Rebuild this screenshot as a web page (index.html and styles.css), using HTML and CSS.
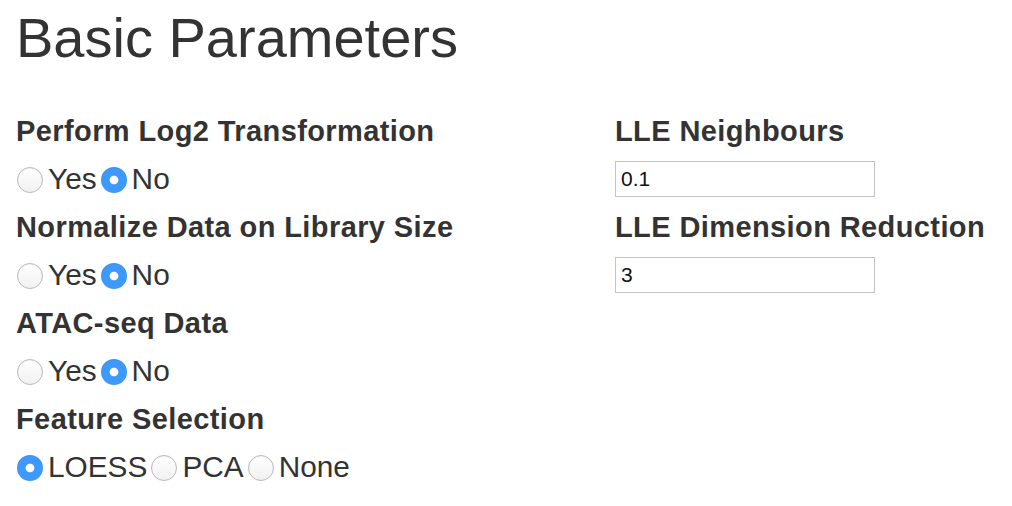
FILE: index.html
```html
<!DOCTYPE html>
<html>
<head>
<meta charset="utf-8">
<link rel="stylesheet" href="styles.css">
</head>
<body>
<div class="page">
  <h1 class="title">Basic Parameters</h1>
  <div class="cols">
    <div class="col">
      <div class="group">
        <div class="label">Perform Log2 Transformation</div>
        <div class="options">
          <label class="opt"><input type="radio" name="log2"><span>Yes</span></label>
          <label class="opt"><input type="radio" name="log2" checked><span>No</span></label>
        </div>
      </div>
      <div class="group">
        <div class="label">Normalize Data on Library Size</div>
        <div class="options">
          <label class="opt"><input type="radio" name="norm"><span>Yes</span></label>
          <label class="opt"><input type="radio" name="norm" checked><span>No</span></label>
        </div>
      </div>
      <div class="group">
        <div class="label">ATAC-seq Data</div>
        <div class="options">
          <label class="opt"><input type="radio" name="atac"><span>Yes</span></label>
          <label class="opt"><input type="radio" name="atac" checked><span>No</span></label>
        </div>
      </div>
      <div class="group">
        <div class="label">Feature Selection</div>
        <div class="options">
          <label class="opt"><input type="radio" name="feat" checked><span>LOESS</span></label>
          <label class="opt"><input type="radio" name="feat"><span>PCA</span></label>
          <label class="opt"><input type="radio" name="feat"><span>None</span></label>
        </div>
      </div>
    </div>
    <div class="col">
      <div class="group">
        <div class="label">LLE Neighbours</div>
        <div class="options">
          <input class="field" type="text" value="0.1">
        </div>
      </div>
      <div class="group">
        <div class="label">LLE Dimension Reduction</div>
        <div class="options">
          <input class="field" type="text" value="3">
        </div>
      </div>
    </div>
  </div>
</div>
</body>
</html>
```

FILE: styles.css
```css
html, body {
  margin: 0;
  padding: 0;
  background: #fff;
}
body {
  font-family: "Liberation Sans", Arial, Helvetica, sans-serif;
  color: #333;
}
.page {
  padding: 7px 16px 0 16px;
}
.title {
  margin: 0;
  font-size: 56px;
  font-weight: 400;
  line-height: 61.6px;
}
.cols {
  margin-top: 38px;
  display: grid;
  grid-template-columns: 599px 1fr;
}
.label {
  font-size: 29px;
  font-weight: 700;
  line-height: 48px;
  letter-spacing: 0.4px;
  white-space: nowrap;
}
.options {
  height: 48px;
  display: flex;
  align-items: center;
  gap: 3px;
}
.opt {
  display: flex;
  align-items: center;
  gap: 5px;
  font-size: 29.8px;
  line-height: 48px;
}
.opt input {
  -webkit-appearance: none;
  appearance: none;
  margin: 0 0 0 1px;
  width: 26px;
  height: 26px;
  border-radius: 50%;
  border: 1px solid #b9b9b9;
  background: linear-gradient(#ffffff, #f1f1f1);
  box-shadow: inset 0 1px 1px rgba(0,0,0,0.05);
  box-sizing: border-box;
  flex: none;
  position: relative;
  top: 1px;
}
.opt input:checked {
  border: none;
  background: radial-gradient(circle, #ffffff 0 3.8px, #3d99fb 4.8px);
}
.field {
  margin: 0;
  width: 260px;
  height: 36px;
  box-sizing: border-box;
  border: 1px solid #c4c4c4;
  padding: 0 5px;
  font-family: "Liberation Sans", Arial, sans-serif;
  font-size: 21px;
  color: #111;
  background: #fff;
  outline: none;
}
```
